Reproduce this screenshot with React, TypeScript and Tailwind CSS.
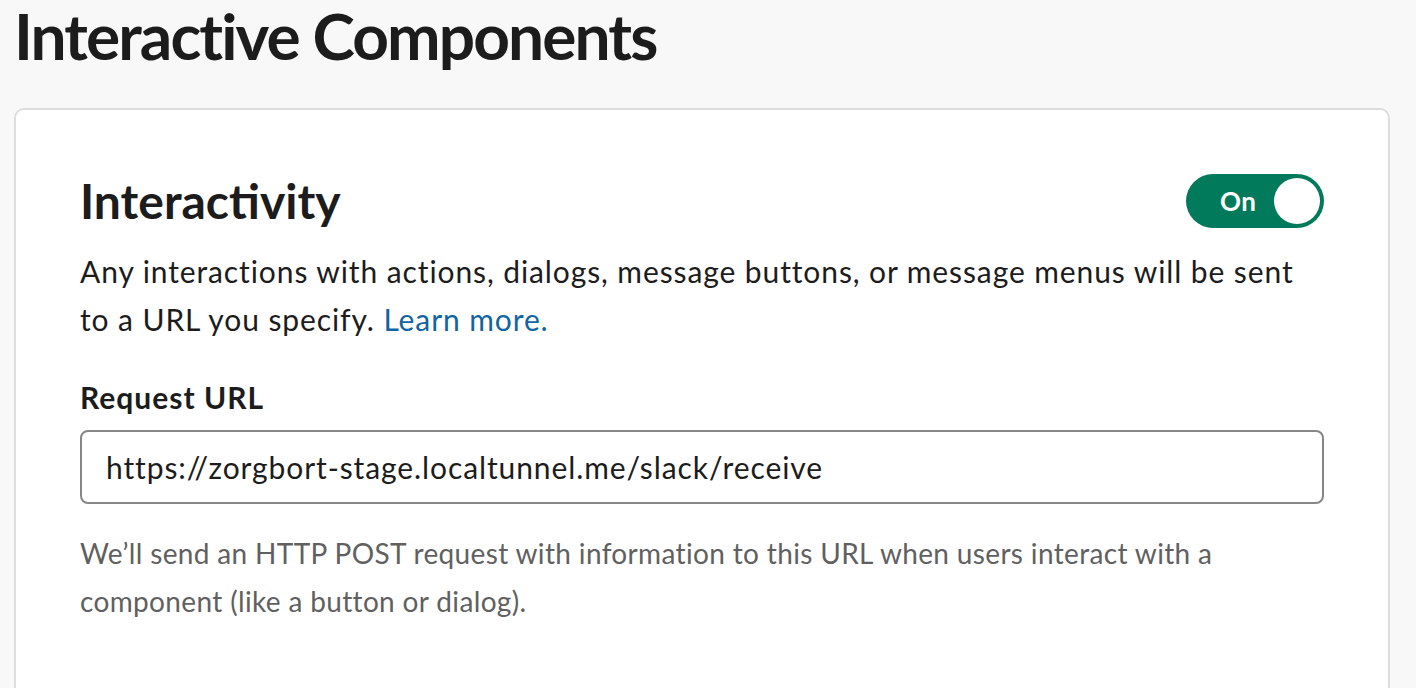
export default function App() {
  return (
    <main className="min-h-screen overflow-hidden bg-[#f8f8f8] font-['Lato',sans-serif] text-[#1d1c1d]">
      <div className="px-[14px]">
        <h1 className="pt-[4px] text-[64px] font-bold leading-[64px] tracking-[-1.9px]">
          Interactive Components
        </h1>

        <section className="mt-[40px] h-[640px] w-[1376px] rounded-t-[10px] border-2 border-[#dddddd] bg-white px-16 pt-[64px]">
          <div className="flex items-center justify-between">
            <h2 className="text-[48px] font-bold leading-[54px]">Interactivity</h2>
            <button
              type="button"
              className="flex h-[54px] w-[138px] items-center justify-between rounded-full bg-[#007a5a] pl-[34px] pr-[4px]"
            >
              <span className="text-[26px] font-bold leading-none tracking-[0.5px] text-white">On</span>
              <span className="h-[46px] w-[46px] rounded-full bg-white" />
            </button>
          </div>

          <p className="mt-[19px] text-[30px] leading-[48px] tracking-[0.9px]">
            Any interactions with actions, dialogs, message buttons, or message menus will be sent
            to a URL you specify. <a className="text-[#1264a3]">Learn more.</a>
          </p>

          <label className="mt-[30px] block text-[30px] font-bold leading-[48px] tracking-[1px]">
            Request URL
          </label>
          <div className="mt-[9px] flex h-[74px] items-center rounded-[8px] border-2 border-[#868686] px-[24px] text-[30px] tracking-[0.9px]">
            https://zorgbort-stage.localtunnel.me/slack/receive
          </div>

          <p className="mt-[25px] text-[28px] leading-[48px] tracking-[0.35px] text-[#616061]">
            We’ll send an HTTP POST request with information to this URL when users interact with a
            component (like a button or dialog).
          </p>
        </section>
      </div>
    </main>
  );
}
